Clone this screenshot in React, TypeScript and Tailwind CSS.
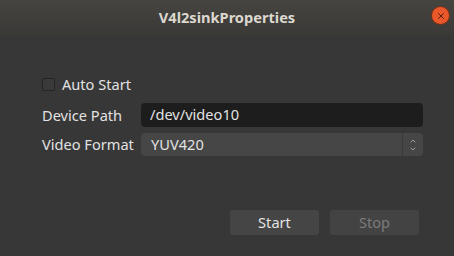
import { ChevronUp, ChevronDown, X } from "lucide-react";

export default function App() {
  return (
    <div className="flex h-[256px] w-[454px] flex-col overflow-hidden bg-[#373737] font-['Noto_Sans',sans-serif] text-[14.6px] text-[#e2e2e2]">
      {/* title bar */}
      <div className="relative flex h-[36px] shrink-0 items-center justify-center bg-gradient-to-b from-[#46443f] to-[#3a3937]">
        <span className="text-[14.6px] font-bold text-[#dcd8cf]">V4l2sinkProperties</span>
        <div className="absolute right-[5px] top-[7px] flex h-[17px] w-[17px] items-center justify-center rounded-full bg-[#e9572b] shadow-[0_0_0_1px_#7a3318]">
          <X size={10} strokeWidth={2.2} className="text-[#4a1c0c]" />
        </div>
      </div>

      <div className="flex flex-1 flex-col pl-[42px] pr-[31px] pt-[41px]">
        <div className="flex h-[14px] items-center gap-[7px]">
          <div className="h-[13px] w-[13px] shrink-0 rounded-[2px] border border-[#242424] bg-[#3a3a3a]" />
          <span className="leading-none">Auto Start</span>
        </div>

        <div className="mt-[12px] flex h-[24px] items-center">
          <span className="w-[99px] shrink-0 leading-none">Device Path</span>
          <div className="flex h-[24px] flex-1 items-center rounded-[4px] bg-[#1d1d1d] px-[9px]">
            /dev/video10
          </div>
        </div>

        <div className="mt-[6px] flex h-[23px] items-center">
          <span className="w-[99px] shrink-0 leading-none">Video Format</span>
          <div className="flex h-[23px] flex-1 items-center rounded-[4px] bg-[#464646]">
            <span className="flex-1 pl-[10px]">YUV420</span>
            <div className="flex h-full w-[21px] flex-col items-center justify-center border-l border-[#3a3a3a]">
              <ChevronUp size={8} strokeWidth={2} className="text-[#c8c8c8]" />
              <ChevronDown size={8} strokeWidth={2} className="text-[#c8c8c8]" />
            </div>
          </div>
        </div>

        <div className="mr-[4px] mt-[54px] flex justify-end gap-[11px]">
          <button className="flex h-[25px] w-[89px] items-center justify-center rounded-[3px] bg-[#454545] text-[#e4e4e4]">
            Start
          </button>
          <button className="flex h-[25px] w-[89px] items-center justify-center rounded-[3px] bg-[#434343] text-[#7b7b7b]">
            Stop
          </button>
        </div>
      </div>
    </div>
  );
}
